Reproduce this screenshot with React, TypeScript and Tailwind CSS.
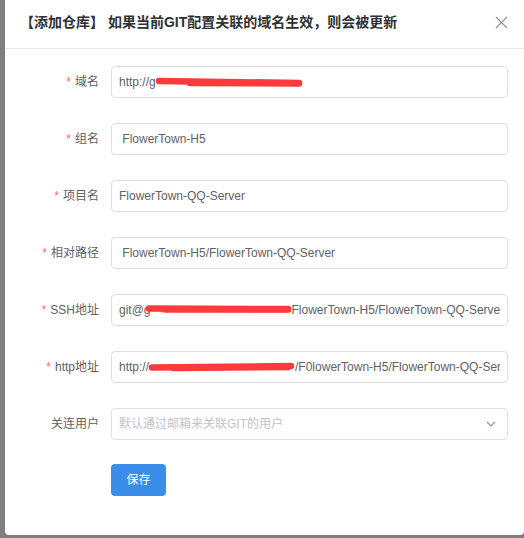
import React from "react";

const FONT = "font-['Liberation_Sans','Noto_Sans_CJK_SC',sans-serif]";

function Row({
  label,
  required,
  children,
}: {
  label: string;
  required?: boolean;
  children: React.ReactNode;
}) {
  return (
    <div className="flex items-center h-[32px]">
      <div className="w-[94px] flex justify-end items-center text-[12px] text-[#606266] whitespace-nowrap">
        {required && <span className="text-[#f56c6c] mr-[4px]">*</span>}
        <span>{label}</span>
      </div>
      <div className="ml-[12px] w-[397px] h-[32px] border border-[#dcdfe6] rounded-[4px] bg-white px-[7px] flex items-center">
        <div className="flex items-center overflow-hidden w-full whitespace-pre text-[12px] text-[#606266]">
          {children}
        </div>
      </div>
    </div>
  );
}

function Scribble({ w, className, paths }: { w: number; className?: string; paths: string[] }) {
  return (
    <svg width={w} height={12} viewBox={`0 0 ${w} 12`} className={`shrink-0 ${className ?? ""}`}>
      {paths.map((d, i) => (
        <path key={i} d={d} stroke="#ff3a3d" strokeWidth={6.5} strokeLinecap="round" fill="none" />
      ))}
    </svg>
  );
}

export default function App() {
  return (
    <div className={`w-[524px] h-[538px] bg-[#7f7f7f] overflow-hidden ${FONT}`}>
      <div className="ml-[5px] w-[519px] h-[535px] bg-white rounded-b-[4px] flex flex-col">
        <div className="h-[49px] border-b border-[#e4e7ed] flex items-center justify-between pl-[15px] pr-[16px] pb-[3px] shrink-0">
          <span className="text-[14px] text-[#303133] font-semibold whitespace-pre">
            【添加仓库】 如果当前GIT配置关联的域名生效，则会被更新
          </span>
          <svg width="13" height="13" viewBox="0 0 13 13" className="shrink-0">
            <path d="M1 1 L12 12 M12 1 L1 12" stroke="#909399" strokeWidth="1.2" fill="none" />
          </svg>
        </div>

        <div className="pt-[17px] flex flex-col">
          <div className="flex flex-col gap-[25px]">
            <Row label="域名" required>
              <span>http://g</span>
              <Scribble w={148} className="-ml-[1px]" paths={["M4 5 L144 7", "M35 7 L144 7.5"]} />
            </Row>
            <Row label="组名" required>
              <span> FlowerTown-H5</span>
            </Row>
            <Row label="项目名" required>
              <span>FlowerTown-QQ-Server</span>
            </Row>
            <Row label="相对路径" required>
              <span> FlowerTown-H5/FlowerTown-QQ-Server</span>
            </Row>
            <Row label="SSH地址" required>
              <span>git@g</span>
              <Scribble w={147} className="-ml-[6px] -mt-[2px]" paths={["M4 5.5 L143 6", "M20 6.5 L143 6.5"]} />
              <span>FlowerTown-H5/FlowerTown-QQ-Serve</span>
            </Row>
            <Row label="http地址" required>
              <span>http://</span>
              <Scribble w={147} className="-ml-[1px]" paths={["M4 6.5 L143 5", "M25 7 L140 6"]} />
              <span>/F0lowerTown-H5/FlowerTown-QQ-Ser</span>
            </Row>
            <div className="flex items-center h-[32px]">
              <div className="w-[94px] flex justify-end items-center text-[12px] text-[#606266]">关连用户</div>
              <div className="ml-[12px] w-[397px] h-[32px] border border-[#dcdfe6] rounded-[4px] bg-white pl-[7px] pr-[11px] flex items-center justify-between">
                <span className="text-[12px] text-[#c0c4cc]">默认通过邮箱来关联GIT的用户</span>
                <svg width="10" height="6" viewBox="0 0 10 6">
                  <path d="M1 1 L5 5 L9 1" stroke="#909399" strokeWidth="1.2" fill="none" />
                </svg>
              </div>
            </div>
          </div>
          <div className="mt-[24px] ml-[106px]">
            <button className="w-[55px] h-[32px] rounded-[4px] bg-[#3a8ee9] text-white text-[12px] flex items-center justify-center">
              保存
            </button>
          </div>
        </div>
      </div>
    </div>
  );
}
